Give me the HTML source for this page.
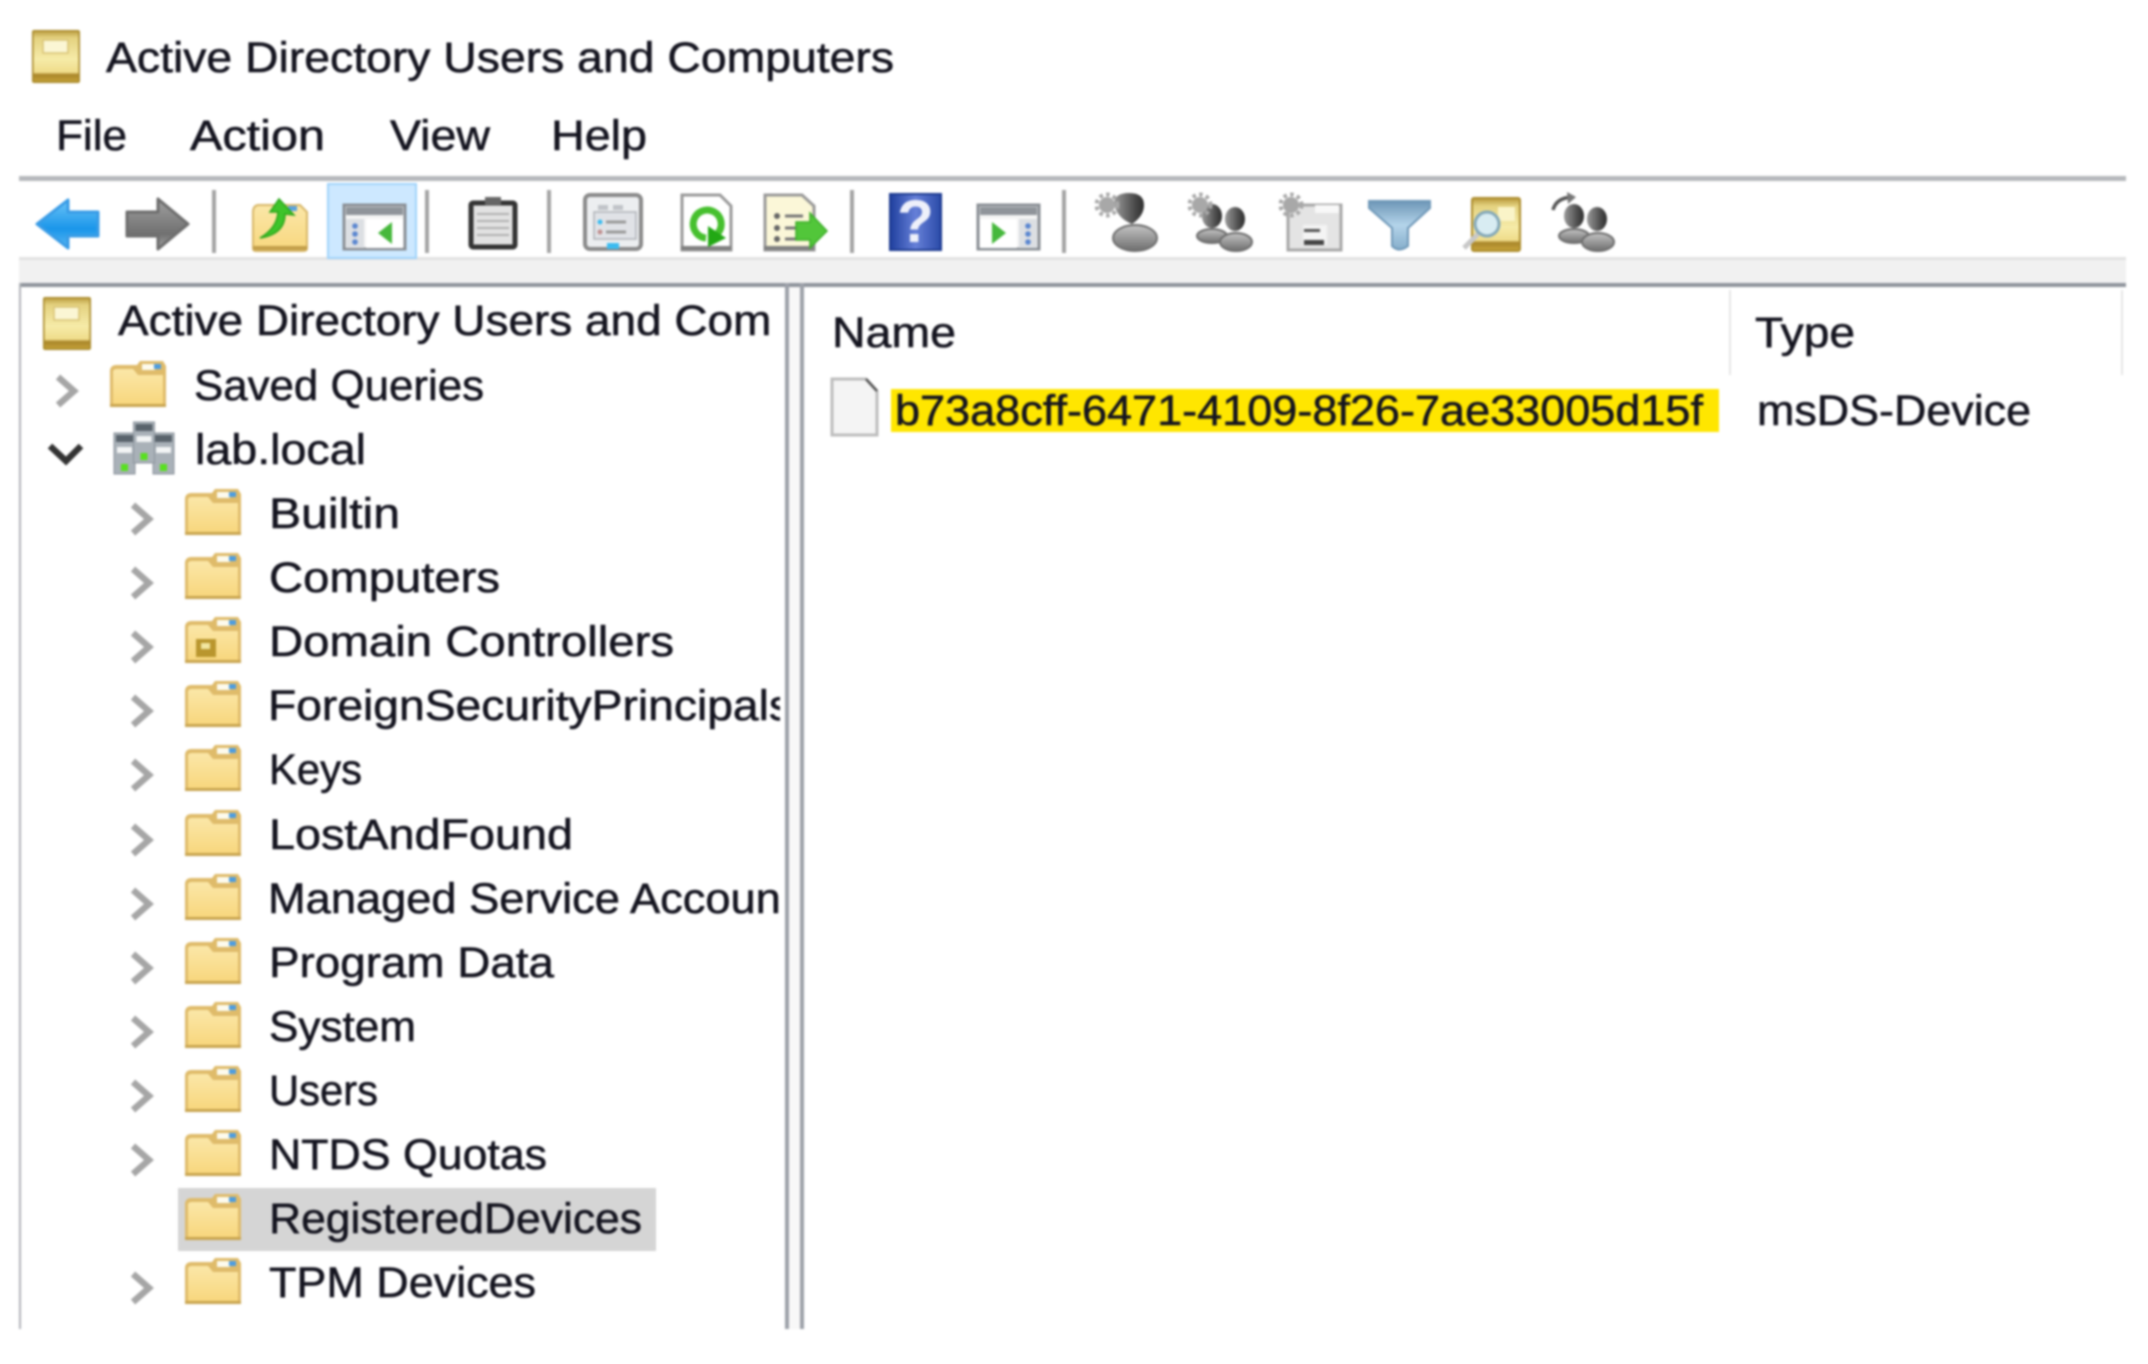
<!DOCTYPE html>
<html><head><meta charset="utf-8"><title>Active Directory Users and Computers</title>
<style>
html,body{margin:0;padding:0;background:#fff;width:2148px;height:1364px;overflow:hidden}
svg{display:block;filter:blur(1.1px)}
text{font-family:"Liberation Sans",sans-serif;font-size:43px;fill:#14141f;stroke:#14141f;stroke-width:.55px}
</style></head><body>
<svg width="2148" height="1364" viewBox="0 0 2148 1364" xmlns="http://www.w3.org/2000/svg">
<defs>
<linearGradient id="fb" x1="0" y1="0" x2="0" y2="1"><stop offset="0" stop-color="#fbe7a8"/><stop offset="1" stop-color="#f8d77e"/></linearGradient>
<linearGradient id="gold" x1="0" y1="0" x2="0" y2="1"><stop offset="0" stop-color="#b8983a"/><stop offset=".15" stop-color="#e4d280"/><stop offset=".55" stop-color="#f6eba8"/><stop offset=".8" stop-color="#efdc8a"/><stop offset=".84" stop-color="#a9852a"/><stop offset="1" stop-color="#c9a63a"/></linearGradient>
<linearGradient id="blue" x1="0" y1="0" x2="0" y2="1"><stop offset="0" stop-color="#6cc4f7"/><stop offset=".6" stop-color="#1a96ea"/><stop offset="1" stop-color="#58b6f2"/></linearGradient>
<linearGradient id="gray" x1="0" y1="0" x2="0" y2="1"><stop offset="0" stop-color="#a0a0a0"/><stop offset=".7" stop-color="#707070"/><stop offset="1" stop-color="#a8a8a8"/></linearGradient>
<linearGradient id="help" x1="0" y1="0" x2="1" y2="0"><stop offset="0" stop-color="#1f3f9e"/><stop offset=".5" stop-color="#6680d8"/><stop offset="1" stop-color="#2a4aa8"/></linearGradient>
<linearGradient id="body" x1="0" y1="0" x2="0" y2="1"><stop offset="0" stop-color="#c4c4c4"/><stop offset="1" stop-color="#6e6e6e"/></linearGradient>
<linearGradient id="head" x1="0" y1="0" x2="1" y2="0"><stop offset="0" stop-color="#9a9a9a"/><stop offset=".7" stop-color="#4a4a4a"/><stop offset="1" stop-color="#2e2e2e"/></linearGradient>
<linearGradient id="fun" x1="0" y1="0" x2="0" y2="1"><stop offset="0" stop-color="#6d96b6"/><stop offset=".5" stop-color="#b4d4ea"/><stop offset="1" stop-color="#86aecb"/></linearGradient>
<clipPath id="lp"><rect x="22" y="287" width="751" height="1042"/></clipPath>
<clipPath id="lp2"><rect x="22" y="287" width="758" height="1042"/></clipPath>
<g id="folder">
<path d="M0 10Q1 5 6 5L27 5L30 1L53 1L56 6L56 45Q56 47 54 47L2 47Q0 47 0 45Z" fill="#dfbb6a"/>
<path d="M3 11Q4 9 7 9L23 9L28 15L53 15L53 44L3 44Z" fill="url(#fb)"/>
<rect x="32" y="4" width="13" height="6" fill="#fdfbee"/>
<rect x="44" y="4" width="7" height="5" fill="#4d9de0"/>
<rect x="0" y="44" width="56" height="3" fill="#c9a550"/>
</g>
<g id="goldbook">
<rect x="0" y="0" width="48" height="53" rx="2" fill="url(#gold)"/>
<rect x="0.8" y="0.8" width="46.4" height="51.4" rx="2" fill="none" stroke="#a98a2c" stroke-width="1.6"/>
<rect x="11" y="10" width="25" height="13" fill="#fbf6d4" stroke="#d9c476" stroke-width="1.5"/>
</g>
<g id="chev"><path d="M-8 -14L8 0L-8 14" fill="none" stroke="#a6a6a6" stroke-width="6.5"/></g>
<g id="gear"><circle r="8" fill="#a8a8a8"/><circle r="10.5" fill="none" stroke="#a8a8a8" stroke-width="4" stroke-dasharray="3.5 3.4"/></g>
<g id="server"><rect x="0" y="0" width="21" height="41" fill="#a9b1b8" stroke="#8c949c"/><rect x="2" y="2" width="17" height="7" fill="#59636c"/><rect x="3" y="14" width="15" height="6" fill="#f2f4f5"/><rect x="7" y="31" width="7" height="7" fill="#58e020"/></g>
<g id="group">
<ellipse cx="13" cy="12" rx="10" ry="12" fill="url(#head)"/>
<ellipse cx="13" cy="32" rx="15" ry="7" fill="url(#body)" stroke="#6e6e6e" stroke-width="2"/>
<ellipse cx="36" cy="15" rx="10" ry="12" fill="url(#head)"/>
<ellipse cx="37" cy="38" rx="16" ry="9" fill="url(#body)" stroke="#6e6e6e" stroke-width="2"/>
</g>
</defs>

<rect width="2148" height="1364" fill="#fff"/>

<!-- title -->
<use href="#goldbook" x="32" y="30"/>
<text x="106" y="72" textLength="788" lengthAdjust="spacingAndGlyphs">Active Directory Users and Computers</text>

<!-- menu -->
<text x="56" y="150" textLength="71" lengthAdjust="spacingAndGlyphs">File</text>
<text x="190" y="150" textLength="135" lengthAdjust="spacingAndGlyphs">Action</text>
<text x="390" y="150" textLength="100" lengthAdjust="spacingAndGlyphs">View</text>
<text x="551" y="150" textLength="96" lengthAdjust="spacingAndGlyphs">Help</text>

<!-- toolbar frame -->
<rect x="19" y="176" width="2107" height="5" fill="#b6b8bc"/>
<rect x="19" y="257" width="2107" height="26" fill="#f1f1f1"/>
<rect x="19" y="257" width="2107" height="3" fill="#e2e2e2"/>

<!-- toolbar separators -->
<g fill="#a4a4a4">
<rect x="212" y="190" width="4" height="63"/><rect x="425" y="190" width="4" height="63"/>
<rect x="547" y="190" width="4" height="63"/><rect x="850" y="190" width="4" height="63"/>
<rect x="1062" y="190" width="4" height="63"/>
</g>

<!-- back -->
<path d="M37 224L68 200L68 212L98 212L98 236L68 236L68 248Z" fill="url(#blue)" stroke="#3a9ce6" stroke-width="3" stroke-linejoin="round"/>
<!-- forward -->
<path d="M188 224L158 199L158 212L127 212L127 236L158 236L158 249Z" fill="url(#gray)" stroke="#6e6e6e" stroke-width="3" stroke-linejoin="round"/>
<!-- up -->
<path d="M253 212Q253 206 258 205L300 205L307 212L307 248Q307 251 303 251L256 251Q253 251 253 248Z" fill="url(#fb)" stroke="#d8b768" stroke-width="2"/>
<rect x="253" y="246" width="54" height="4" fill="#c39f4a"/>
<rect x="288" y="206" width="9" height="5" fill="#5aa3df"/>
<path d="M260 238Q277 228 278 212L270 212L279 199L294 215L285 214Q285 234 260 238Z" fill="#3ec42a" stroke="#2ba61a" stroke-width="1.5"/>
<!-- highlight + show tree -->
<rect x="328" y="184" width="88" height="74" fill="#cde8ff" stroke="#a0d3fb" stroke-width="2"/>
<rect x="344" y="205" width="61" height="44" fill="#f4f4f4" stroke="#8a8f95" stroke-width="3"/>
<rect x="346" y="207" width="57" height="8" fill="#8f949a"/>
<rect x="346" y="219" width="18" height="29" fill="#dcdfe3"/>
<rect x="366" y="219" width="37" height="29" fill="#fff"/>
<circle cx="355" cy="226" r="2.8" fill="#5a86d0"/><circle cx="355" cy="234" r="2.8" fill="#5a86d0"/><circle cx="355" cy="242" r="2.8" fill="#5a86d0"/>
<path d="M392 222L378 233L392 244Z" fill="#46b83c"/>
<!-- clipboard -->
<rect x="471" y="203" width="44" height="44" rx="2" fill="#e2e2e2" stroke="#333" stroke-width="5"/>
<rect x="485" y="197" width="16" height="8" fill="#666"/>
<g stroke="#b0b0b0" stroke-width="2"><path d="M477 214H509M477 221H509M477 228H509M477 235H509"/></g>
<!-- properties -->
<rect x="585" y="195" width="56" height="54" rx="5" fill="#eceef0" stroke="#8a8a8a" stroke-width="4"/>
<rect x="594" y="212" width="42" height="27" fill="#e0e2e6" stroke="#b0b3b8" stroke-width="1.5"/>
<rect x="598" y="205" width="10" height="5" fill="#c0c3c8"/><rect x="613" y="205" width="10" height="5" fill="#c0c3c8"/>
<circle cx="600" cy="222" r="2.5" fill="#3cbcf0"/><circle cx="600" cy="232" r="2.5" fill="#c09090"/>
<path d="M606 222H626M606 232H626" stroke="#9a9a9a" stroke-width="3"/>
<rect x="607" y="243" width="12" height="6" fill="#3cbcf0"/>
<!-- refresh -->
<path d="M682 195L720 195L731 206L731 250L682 250Z" fill="#fff" stroke="#9a9a9a" stroke-width="3"/>
<rect x="681" y="246" width="50" height="4" fill="#808080"/>
<path d="M718 233A14 14 0 1 0 706 238" fill="none" stroke="#46c02e" stroke-width="7"/>
<path d="M708 226L726 238L708 247Z" fill="#22a814"/>
<!-- export -->
<path d="M765 195L802 195L814 206L814 250L765 250Z" fill="#fbf7d8" stroke="#999" stroke-width="3"/>
<rect x="764" y="246" width="50" height="4" fill="#808080"/>
<g fill="#666"><circle cx="777" cy="216" r="3"/><circle cx="777" cy="228" r="3"/><circle cx="777" cy="239" r="3"/></g>
<path d="M785 216H803M785 228H797M785 239H797" stroke="#777" stroke-width="3"/>
<path d="M796 222L810 222L810 213L827 231L810 248L810 240L796 240Z" fill="#52c63a" stroke="#3cae28" stroke-width="1.5"/>
<!-- help -->
<rect x="890" y="194" width="51" height="56" fill="url(#help)" stroke="#1c3a90" stroke-width="2"/>
<text x="915.5" y="242" text-anchor="middle" style="font-size:60px;font-weight:bold;fill:#eef0fa;stroke:none">?</text>
<!-- action pane -->
<rect x="978" y="205" width="61" height="44" fill="#f4f4f4" stroke="#8a8f95" stroke-width="3"/>
<rect x="980" y="207" width="57" height="8" fill="#8f949a"/>
<rect x="1019" y="219" width="18" height="29" fill="#dcdfe3"/>
<rect x="980" y="219" width="37" height="29" fill="#fff"/>
<circle cx="1028" cy="226" r="2.8" fill="#5a86d0"/><circle cx="1028" cy="234" r="2.8" fill="#5a86d0"/><circle cx="1028" cy="242" r="2.8" fill="#5a86d0"/>
<path d="M992 222L1006 233L992 244Z" fill="#46b83c"/>

<!-- new user -->
<ellipse cx="1135" cy="238" rx="22" ry="13" fill="url(#body)" stroke="#6e6e6e" stroke-width="2"/>
<path d="M1114 204Q1114 193 1129 193Q1144 193 1144 205Q1144 216 1132 224Q1117 218 1114 204Z" fill="url(#head)"/>
<use href="#gear" x="1107" y="205"/>
<!-- new group -->
<use href="#group" x="1199" y="204"/>
<use href="#gear" x="1200" y="205"/>
<!-- new ou -->
<rect x="1288" y="205" width="53" height="45" fill="#e4e4e4" stroke="#a8a8a8" stroke-width="3"/>
<rect x="1315" y="205" width="24" height="8" fill="#f8f8f8"/>
<rect x="1303" y="225" width="24" height="20" fill="#f4f4f4"/>
<rect x="1304" y="229" width="16" height="3" fill="#555"/><rect x="1304" y="240" width="20" height="5" fill="#444"/>
<use href="#gear" x="1291" y="205"/>
<!-- filter -->
<path d="M1369 201L1430 201L1430 208L1408 228L1408 246Q1399 253 1392 246L1392 228L1369 208Z" fill="url(#fun)" stroke="#6f98b8" stroke-width="2"/>
<!-- find -->
<rect x="1472" y="198" width="48" height="53" rx="2" fill="url(#gold)" stroke="#ac8c2c" stroke-width="2"/>
<rect x="1498" y="207" width="17" height="14" fill="#faf4c8"/>
<path d="M1464 248L1478 234" stroke="#c8c8c8" stroke-width="5"/>
<circle cx="1487" cy="224" r="12" fill="#d8ecf2" stroke="#84a8b8" stroke-width="3"/>
<!-- move -->
<path d="M1553 210Q1556 198 1572 197" fill="none" stroke="#555" stroke-width="3.5"/>
<path d="M1567 192L1576 197L1568 204Z" fill="#777"/>
<use href="#group" x="1561" y="204"/>

<!-- panes -->
<rect x="19" y="283" width="2107" height="4" fill="#8f949c"/>
<rect x="19" y="283" width="2" height="1046" fill="#b0b3b8"/>
<rect x="785" y="283" width="4" height="1046" fill="#9da1a9"/>
<rect x="789" y="287" width="11" height="1042" fill="#f8f8f8"/>
<rect x="800" y="283" width="4" height="1046" fill="#9da1a9"/>

<!-- tree -->
<rect x="178" y="1188" width="478" height="63" fill="#d5d5d5"/>
<use href="#goldbook" x="43" y="297"/>
<g clip-path="url(#lp)">
<text x="118" y="335" textLength="781" lengthAdjust="spacingAndGlyphs">Active Directory Users and Computers</text>
</g>
<use href="#folder" x="110" y="360"/>
<use href="#chev" x="66" y="391"/>
<text x="194" y="400" textLength="290" lengthAdjust="spacingAndGlyphs">Saved Queries</text>

<path d="M50 446L66 461L81 446" fill="none" stroke="#333" stroke-width="6.5"/>
<use href="#server" x="114" y="433"/><use href="#server" x="153" y="433"/><use href="#server" x="133.5" y="422"/>
<text x="195" y="464" textLength="171" lengthAdjust="spacingAndGlyphs">lab.local</text>

<use href="#folder" x="185" y="488"/><use href="#chev" x="141" y="519"/>
<text x="269" y="528" textLength="131" lengthAdjust="spacingAndGlyphs">Builtin</text>
<use href="#folder" x="185" y="552"/><use href="#chev" x="141" y="583"/>
<text x="269" y="592" textLength="231" lengthAdjust="spacingAndGlyphs">Computers</text>
<use href="#folder" x="185" y="616"/><use href="#chev" x="141" y="647"/>
<rect x="196" y="639" width="20" height="18" fill="#b9962e"/><rect x="201" y="643" width="9" height="6" fill="#f2e6a0"/>
<text x="269" y="656" textLength="405" lengthAdjust="spacingAndGlyphs">Domain Controllers</text>
<use href="#folder" x="185" y="680"/><use href="#chev" x="141" y="711"/>
<g clip-path="url(#lp2)"><text x="268" y="720" textLength="524" lengthAdjust="spacingAndGlyphs">ForeignSecurityPrincipals</text></g>
<use href="#folder" x="185" y="744"/><use href="#chev" x="141" y="775"/>
<text x="269" y="784" textLength="93" lengthAdjust="spacingAndGlyphs">Keys</text>
<use href="#folder" x="185" y="809"/><use href="#chev" x="141" y="840"/>
<text x="269" y="849" textLength="304" lengthAdjust="spacingAndGlyphs">LostAndFound</text>
<use href="#folder" x="185" y="873"/><use href="#chev" x="141" y="904"/>
<g clip-path="url(#lp2)"><text x="268" y="913" textLength="548" lengthAdjust="spacingAndGlyphs">Managed Service Accounts</text></g>
<use href="#folder" x="185" y="937"/><use href="#chev" x="141" y="968"/>
<text x="269" y="977" textLength="285" lengthAdjust="spacingAndGlyphs">Program Data</text>
<use href="#folder" x="185" y="1001"/><use href="#chev" x="141" y="1032"/>
<text x="269" y="1041" textLength="147" lengthAdjust="spacingAndGlyphs">System</text>
<use href="#folder" x="185" y="1065"/><use href="#chev" x="141" y="1096"/>
<text x="269" y="1105" textLength="109" lengthAdjust="spacingAndGlyphs">Users</text>
<use href="#folder" x="185" y="1129"/><use href="#chev" x="141" y="1160"/>
<text x="269" y="1169" textLength="278" lengthAdjust="spacingAndGlyphs">NTDS Quotas</text>
<use href="#folder" x="185" y="1193"/>
<text x="269" y="1233" textLength="373" lengthAdjust="spacingAndGlyphs">RegisteredDevices</text>
<use href="#folder" x="185" y="1257"/><use href="#chev" x="141" y="1288"/>
<text x="269" y="1297" textLength="267" lengthAdjust="spacingAndGlyphs">TPM Devices</text>

<!-- right pane -->
<text x="832" y="347" textLength="124" lengthAdjust="spacingAndGlyphs">Name</text>
<text x="1755" y="347" textLength="100" lengthAdjust="spacingAndGlyphs">Type</text>
<rect x="1729" y="290" width="2" height="85" fill="#e6e6e6"/>
<rect x="2121" y="290" width="2" height="85" fill="#e6e6e6"/>
<path d="M832 379L866 379L877 391L877 435L832 435Z" fill="#f4f4f4" stroke="#bdbdbd" stroke-width="3"/>
<path d="M866 379L877 391" stroke="#555" stroke-width="2.5"/>
<rect x="891" y="389" width="828" height="43" fill="#ffe600"/>
<text x="895" y="425" textLength="808" lengthAdjust="spacingAndGlyphs">b73a8cff-6471-4109-8f26-7ae33005d15f</text>
<text x="1757" y="425" textLength="274" lengthAdjust="spacingAndGlyphs">msDS-Device</text>
</svg>
</body></html>
